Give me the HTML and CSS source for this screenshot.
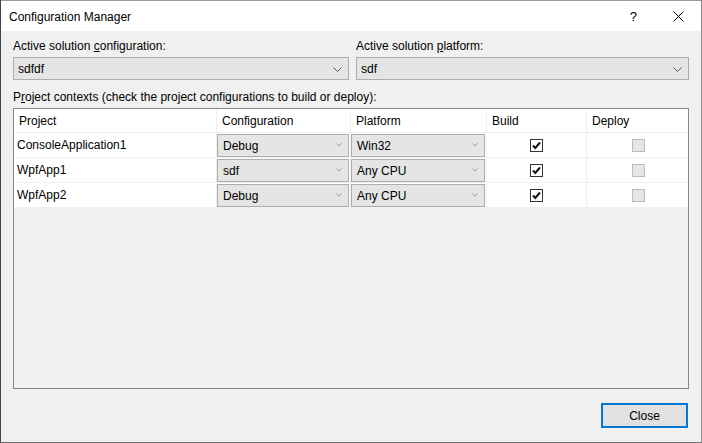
FILE: index.html
```html
<!DOCTYPE html>
<html>
<head>
<meta charset="utf-8">
<link rel="stylesheet" href="styles.css">
</head>
<body>
<div class="window">
  <div class="titlebar">
    <span class="title">Configuration Manager</span>
    <span class="help">?</span>
    <svg class="close-x" width="11" height="11" viewBox="0 0 11 11"><path d="M0.5 0.5 L10.5 10.5 M10.5 0.5 L0.5 10.5" stroke="#000" stroke-width="1" fill="none"/></svg>
  </div>
  <div class="content">
    <div class="top-row">
      <div class="field">
        <div class="label">Active solution <u>c</u>onfiguration:</div>
        <div class="combo big">
          <span>sdfdf</span>
          <svg class="chev" width="9" height="5" viewBox="0 0 9 5"><path d="M0.5 0.5 L4.5 4.5 L8.5 0.5" stroke="#555" stroke-width="1" fill="none"/></svg>
        </div>
      </div>
      <div class="field">
        <div class="label">Active solution <u>p</u>latform:</div>
        <div class="combo big">
          <span>sdf</span>
          <svg class="chev" width="9" height="5" viewBox="0 0 9 5"><path d="M0.5 0.5 L4.5 4.5 L8.5 0.5" stroke="#555" stroke-width="1" fill="none"/></svg>
        </div>
      </div>
    </div>
    <div class="label ctx-label">P<u>r</u>oject contexts (check the project configurations to build or deploy):</div>
    <div class="grid">
      <div class="row head">
        <div class="cell">Project</div>
        <div class="cell">Configuration</div>
        <div class="cell">Platform</div>
        <div class="cell">Build</div>
        <div class="cell">Deploy</div>
      </div>
      <div class="row">
        <div class="cell name">ConsoleApplication1</div>
        <div class="cell combo-cell"><div class="combo small"><span>Debug</span><svg class="chev-s" width="6" height="4" viewBox="0 0 6 4"><path d="M0.5 0.5 L3 3 L5.5 0.5" stroke="#999" stroke-width="1" fill="none"/></svg></div></div>
        <div class="cell combo-cell"><div class="combo small"><span>Win32</span><svg class="chev-s" width="6" height="4" viewBox="0 0 6 4"><path d="M0.5 0.5 L3 3 L5.5 0.5" stroke="#999" stroke-width="1" fill="none"/></svg></div></div>
        <div class="cell check-cell"><span class="cb on"><svg width="11" height="11" viewBox="0 0 11 11"><path d="M2 5.5 L4.3 8 L9 2.5" stroke="#111" stroke-width="2" fill="none"/></svg></span></div>
        <div class="cell check-cell"><span class="cb off"></span></div>
      </div>
      <div class="row">
        <div class="cell name">WpfApp1</div>
        <div class="cell combo-cell"><div class="combo small"><span>sdf</span><svg class="chev-s" width="6" height="4" viewBox="0 0 6 4"><path d="M0.5 0.5 L3 3 L5.5 0.5" stroke="#999" stroke-width="1" fill="none"/></svg></div></div>
        <div class="cell combo-cell"><div class="combo small"><span>Any CPU</span><svg class="chev-s" width="6" height="4" viewBox="0 0 6 4"><path d="M0.5 0.5 L3 3 L5.5 0.5" stroke="#999" stroke-width="1" fill="none"/></svg></div></div>
        <div class="cell check-cell"><span class="cb on"><svg width="11" height="11" viewBox="0 0 11 11"><path d="M2 5.5 L4.3 8 L9 2.5" stroke="#111" stroke-width="2" fill="none"/></svg></span></div>
        <div class="cell check-cell"><span class="cb off"></span></div>
      </div>
      <div class="row">
        <div class="cell name">WpfApp2</div>
        <div class="cell combo-cell"><div class="combo small"><span>Debug</span><svg class="chev-s" width="6" height="4" viewBox="0 0 6 4"><path d="M0.5 0.5 L3 3 L5.5 0.5" stroke="#999" stroke-width="1" fill="none"/></svg></div></div>
        <div class="cell combo-cell"><div class="combo small"><span>Any CPU</span><svg class="chev-s" width="6" height="4" viewBox="0 0 6 4"><path d="M0.5 0.5 L3 3 L5.5 0.5" stroke="#999" stroke-width="1" fill="none"/></svg></div></div>
        <div class="cell check-cell"><span class="cb on"><svg width="11" height="11" viewBox="0 0 11 11"><path d="M2 5.5 L4.3 8 L9 2.5" stroke="#111" stroke-width="2" fill="none"/></svg></span></div>
        <div class="cell check-cell"><span class="cb off"></span></div>
      </div>
    </div>
    <div class="footer">
      <button class="btn">Close</button>
    </div>
  </div>
</div>
</body>
</html>
```

FILE: styles.css
```css
* { box-sizing: border-box; }
html, body { margin: 0; padding: 0; }
body {
  width: 702px;
  height: 443px;
  font-family: "Liberation Sans", Arial, sans-serif;
  font-size: 12px;
  color: #000;
  background: #f0f0f0;
  overflow: hidden;
}
.window {
  width: 702px;
  height: 443px;
  display: flex;
  flex-direction: column;
  border-left: 1px solid #3b4455;
  border-right: 1px solid #8a8a8a;
  border-bottom: 1px solid #6f6f6f;
  background: #f0f0f0;
}
.titlebar {
  height: 31px;
  flex: none;
  background: #fff;
  display: flex;
  align-items: center;
  padding-left: 8px;
  border-top: 1px solid #9a9a9a;
}
.title { flex: 1; line-height: 16px; padding-top: 1px; }
.help { font-size: 13px; margin-right: 36px; padding-top: 1px; }
.close-x { margin-right: 17px; margin-top: 1px; }
.content {
  flex: 1;
  display: flex;
  flex-direction: column;
  padding: 7px 12px 14px 12px;
}
.top-row {
  display: grid;
  grid-template-columns: 336px 333px;
  column-gap: 7px;
}
.label { line-height: 16px; height: 16px; white-space: nowrap; }
.combo {
  display: flex;
  align-items: center;
  background: #e5e5e5;
  border: 1px solid #acacac;
}
.combo span { flex: 1; }
.combo.big {
  margin-top: 3px;
  height: 23px;
  padding: 0 6px 0 4px;
}
.chev { margin-top: 1px; }
.ctx-label { margin-top: 9px; }
.grid {
  flex: 1;
  margin-top: 3px;
  border: 1px solid #828790;
  background: #f0f0f0;
}
.row {
  display: grid;
  grid-template-columns: 203px 134px 136px 100px 102px;
  background: #fff;
  border-bottom: 1px solid #f0f0f0;
  height: 25px;
}
.row.head { height: 24px; border-bottom-color: #f0f0f0; }
.cell {
  border-right: 1px solid #f0f0f0;
  display: flex;
  align-items: center;
  white-space: nowrap;
  overflow: hidden;
}
.cell:last-child { border-right: none; }
.head .cell { padding-left: 5px; }
.cell.name { padding-left: 3px; }
.combo-cell { padding: 1px 1px 0 0; align-items: stretch; }
.combo.small {
  flex: 1;
  height: 23px;
  padding: 0 6px 0 5px;
  border-color: #adadad;
  background: #e5e5e5;
}
.chev-s { margin-top: -1px; }
.check-cell { justify-content: center; }
.cb {
  width: 13px;
  height: 13px;
  display: flex;
  align-items: center;
  justify-content: center;
}
.cb.on { border: 1px solid #333; background: #fff; }
.cb.off { border: 1px solid #bcbcbc; background: #e6e6e6; }
.footer {
  display: flex;
  justify-content: flex-end;
  margin-top: 14px;
  padding-right: 1px;
}
.btn {
  width: 87px;
  height: 25px;
  border: 2px solid #0078d7;
  background: #e1e1e1;
  font-family: "Liberation Sans", Arial, sans-serif;
  font-size: 12px;
  color: #000;
  padding: 0;
  margin: 0;
}
```
